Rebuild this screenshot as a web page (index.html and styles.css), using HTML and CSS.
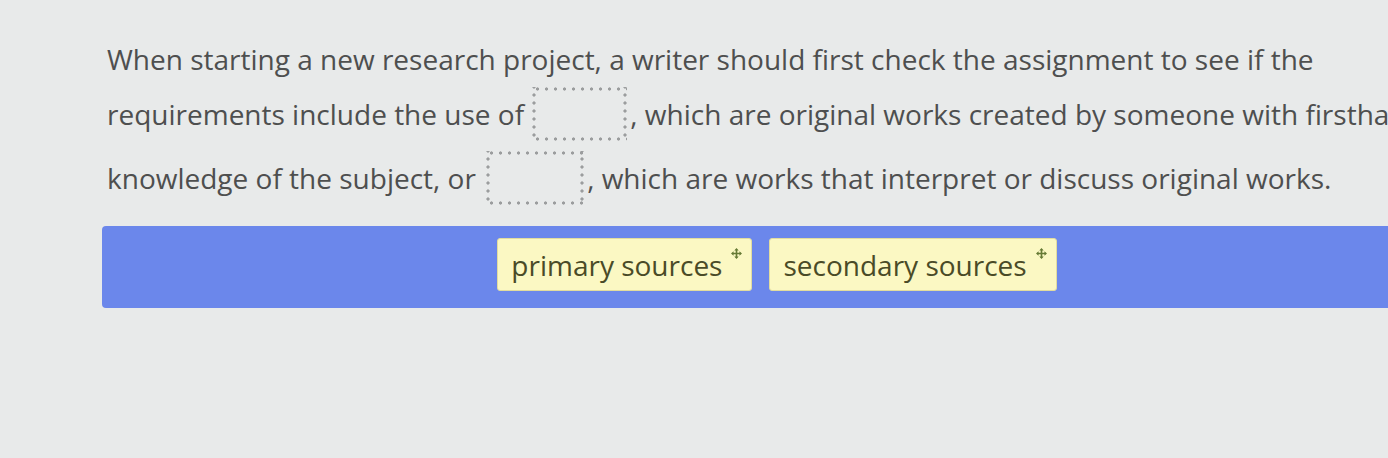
FILE: index.html
```html
<!DOCTYPE html>
<html lang="en">
<head>
<meta charset="utf-8">
<title>Research sources</title>
<link rel="stylesheet" href="styles.css">
</head>
<body>
<main class="page">
  <p class="question">When starting a new research project, a writer should first check the assignment to see if the requirements include the use of <span class="blank blank-1"></span>, which are original works created by someone with firsthand knowledge of the subject, or <span class="blank blank-2"></span>, which are works that interpret or discuss original works.</p>
  <div class="bank">
    <div class="token token-1">primary sources
      <svg class="move" viewBox="0 0 12 12" width="11" height="11"><path d="M6 1.5v9M1.5 6h9" stroke="#667a35" stroke-width="1.8" fill="none"/><path d="M6 0L3.6 2.8h4.8zM6 12L3.6 9.2h4.8zM0 6L2.8 3.6v4.8zM12 6L9.2 3.6v4.8z" fill="#667a35"/></svg>
    </div>
    <div class="token token-2">secondary sources
      <svg class="move" viewBox="0 0 12 12" width="11" height="11"><path d="M6 1.5v9M1.5 6h9" stroke="#667a35" stroke-width="1.8" fill="none"/><path d="M6 0L3.6 2.8h4.8zM6 12L3.6 9.2h4.8zM0 6L2.8 3.6v4.8zM12 6L9.2 3.6v4.8z" fill="#667a35"/></svg>
    </div>
  </div>
</main>
</body>
</html>
```
FILE: styles.css
```css
html, body {
  margin: 0;
  padding: 0;
  background: #e8eaea;
  overflow: hidden;
}
body {
  width: 1388px;
  height: 458px;
}
.page {
  width: 1350px;
  padding: 39px 0 0 102px;
  font-family: "Open Sans", "Noto Sans", sans-serif;
  color: #4e4f4f;
}
.question {
  width: 1350px;
  margin: 0 0 0 5px;
  font-size: 28px;
  line-height: 40px;
}
.blank {
  display: inline-block;
  box-sizing: border-box;
  width: 95px;
  height: 54px;
  margin: 8px 3px 2px 1px;
  vertical-align: -18px;
  background:
    radial-gradient(circle, #9b9d9e 1.3px, transparent 1.9px) 1px 0 / 9px 4px repeat-x,
    radial-gradient(circle, #9b9d9e 1.3px, transparent 1.9px) 1px 100% / 9px 4px repeat-x,
    radial-gradient(circle, #9b9d9e 1.3px, transparent 1.9px) 0 4px / 4px 8px repeat-y,
    radial-gradient(circle, #9b9d9e 1.3px, transparent 1.9px) 100% 4px / 4px 8px repeat-y;
}
.blank-2 {
  width: 98px;
  margin-left: 3px;
}
.bank {
  box-sizing: border-box;
  margin-top: 19px;
  width: 1350px;
  height: 82px;
  background: #6b87eb;
  border-radius: 4px;
  display: flex;
  justify-content: center;
  align-items: flex-start;
  gap: 17px;
  padding-top: 12px;
}
.token {
  position: relative;
  box-sizing: border-box;
  height: 53px;
  padding: 0 29px 0 13px;
  display: flex;
  align-items: center;
  background: #fbf8c3;
  border: 1px solid #e2dc9e;
  border-radius: 3px;
  color: #4a4b27;
  font-size: 28px;
}
.move {
  position: absolute;
  top: 9px;
  right: 9px;
}
```
